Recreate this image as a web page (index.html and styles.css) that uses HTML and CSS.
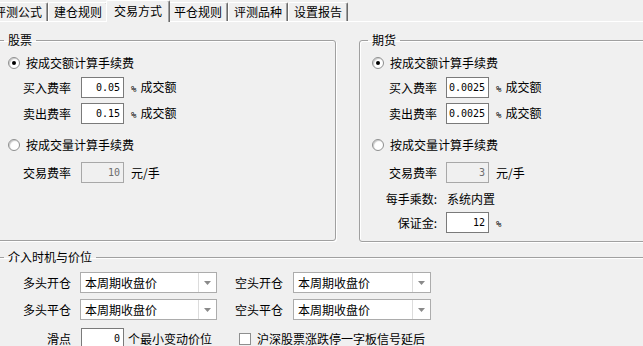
FILE: index.html
```html
<!DOCTYPE html>
<html>
<head>
  <title>交易方式</title>
  <link rel="stylesheet" href="styles.css">
</head>
<body>

  <div class="tabs">
    <div class="tab">评测公式</div>
    <div class="tab">建仓规则</div>
    <div class="tab active">交易方式</div>
    <div class="tab">平仓规则</div>
    <div class="tab">评测品种</div>
    <div class="tab">设置报告</div>
  </div>

  <div class="panel">
    <div class="top-row">

      <!-- 股票 -->
      <fieldset class="group stock">
        <legend>股票</legend>
        <div class="radio-row first">
          <span class="radio on"></span>按成交额计算手续费
        </div>
        <div class="field-row gap4">
          <span class="label">买入费率</span>
          <span class="input">0.05</span>
          <span class="unit"><span class="pct">%</span>成交额</span>
        </div>
        <div class="field-row gap5">
          <span class="label">卖出费率</span>
          <span class="input">0.15</span>
          <span class="unit"><span class="pct">%</span>成交额</span>
        </div>
        <div class="radio-row gap11">
          <span class="radio"></span>按成交量计算手续费
        </div>
        <div class="field-row gap7">
          <span class="label">交易费率</span>
          <span class="input disabled">10</span>
          <span class="unit">元/手</span>
        </div>
      </fieldset>

      <!-- 期货 -->
      <fieldset class="group futures">
        <legend>期货</legend>
        <div class="radio-row first">
          <span class="radio on"></span>按成交额计算手续费
        </div>
        <div class="field-row gap4">
          <span class="label">买入费率</span>
          <span class="input">0.0025</span>
          <span class="unit"><span class="pct">%</span>成交额</span>
        </div>
        <div class="field-row gap5">
          <span class="label">卖出费率</span>
          <span class="input">0.0025</span>
          <span class="unit"><span class="pct">%</span>成交额</span>
        </div>
        <div class="radio-row gap11">
          <span class="radio"></span>按成交量计算手续费
        </div>
        <div class="field-row gap7">
          <span class="label">交易费率</span>
          <span class="input disabled">3</span>
          <span class="unit">元/手</span>
        </div>
        <div class="field-row gap5">
          <span class="label">每手乘数:</span>
          <span class="value">系统内置</span>
        </div>
        <div class="field-row gap3">
          <span class="label">保证金:</span>
          <span class="input">12</span>
          <span class="unit"><span class="pct">%</span></span>
        </div>
      </fieldset>

    </div>

    <!-- 介入时机与价位 -->
    <fieldset class="group entry">
      <legend>介入时机与价位</legend>
      <div class="combo-row first">
        <span class="label">多头开仓</span>
        <span class="combo"><span class="combo-text">本周期收盘价</span><span class="combo-arrow"><svg width="7" height="4" viewBox="0 0 7 4"><path d="M0 0h7L3.5 4z" fill="#8a8a8a"/></svg></span></span>
        <span class="label wide">空头开仓</span>
        <span class="combo right"><span class="combo-text">本周期收盘价</span><span class="combo-arrow"><svg width="7" height="4" viewBox="0 0 7 4"><path d="M0 0h7L3.5 4z" fill="#8a8a8a"/></svg></span></span>
      </div>
      <div class="combo-row gap6">
        <span class="label">多头平仓</span>
        <span class="combo"><span class="combo-text">本周期收盘价</span><span class="combo-arrow"><svg width="7" height="4" viewBox="0 0 7 4"><path d="M0 0h7L3.5 4z" fill="#8a8a8a"/></svg></span></span>
        <span class="label wide">空头平仓</span>
        <span class="combo right"><span class="combo-text">本周期收盘价</span><span class="combo-arrow"><svg width="7" height="4" viewBox="0 0 7 4"><path d="M0 0h7L3.5 4z" fill="#8a8a8a"/></svg></span></span>
      </div>
      <div class="combo-row gap8">
        <span class="label slip">滑点</span>
        <span class="input">0</span>
        <span class="unit tight">个最小变动价位</span>
        <span class="check"></span>
        <span>沪深股票涨跌停一字板信号延后</span>
      </div>
    </fieldset>
  </div>

</body>
</html>
```

FILE: styles.css
```css
body {
  margin: 0;
  width: 643px;
  height: 346px;
  overflow: hidden;
  background-color: #f0f0f0;
  font-family: "Noto Sans CJK SC", sans-serif;
  font-size: 12px;
  line-height: 14px;
  color: #000000;
}

/* Tab strip */
.tabs {
  display: flex;
  align-items: flex-end;
  height: 21px;
  margin-left: -12px;
}

.tab {
  flex: none;
  width: 60px;
  height: 19px;
  box-sizing: border-box;
  border-top: 1px solid #ffffff;
  border-left: 1px solid #ffffff;
  border-right: 1px solid #696969;
  box-shadow: inset -1px 0 #a0a0a0;
  border-radius: 2px 2px 0 0;
  text-align: center;
  line-height: 18px;
}

.tab.active {
  position: relative;
  z-index: 1;
  width: 64px;
  height: 22px;
  margin: 0 -2px -1px;
  background-color: #f0f0f0;
  line-height: 20px;
}

.panel {
  border-top: 1px solid #ffffff;
  padding-top: 11px;
}

/* Group boxes */
.group {
  margin: 0;
  padding: 0;
  min-width: 0;
  box-sizing: border-box;
  border: 1px solid #a0a0a0;
  border-radius: 3px;
  box-shadow: 1px 1px 0 #ffffff, inset 1px 1px 0 #ffffff;
}

.group legend {
  margin-left: 8px;
  padding: 0 4px;
  line-height: 14px;
}

.top-row {
  display: flex;
  gap: 23px;
  margin-left: -5px;
}

.stock {
  flex: none;
  width: 341px;
  height: 208px;
}

.futures {
  flex: none;
  width: 340px;
  height: 209px;
}

.entry {
  width: 700px;
  height: 130px;
  margin: 8px 0 0 -5px;
}

/* Rows */
.radio-row {
  display: flex;
  align-items: center;
  height: 20px;
  padding-left: 12px;
}

.field-row {
  display: flex;
  align-items: center;
  height: 21px;
  padding-left: 27px;
}

.futures .field-row {
  padding-left: 25px;
}

.combo-row {
  display: flex;
  align-items: center;
  height: 21px;
  padding-left: 27px;
}

.first { margin-top: 6px; }
.entry .first { margin-top: 8px; }
.gap3 { margin-top: 3px; }
.gap4 { margin-top: 4px; }
.gap5 { margin-top: 5px; }
.gap6 { margin-top: 6px; }
.gap7 { margin-top: 7px; }
.gap8 { margin-top: 8px; }
.gap11 { margin-top: 11px; }

.label {
  flex: none;
  width: 58px;
  box-sizing: border-box;
  padding-right: 10px;
  text-align: right;
}

.futures .label {
  width: 61px;
  padding-right: 9px;
}

.futures .value {
  margin-left: 1px;
}

.combo-row .label {
  width: 57px;
  padding-right: 9px;
}

.combo-row .label.slip {
  width: 58px;
  padding-right: 10px;
}

.combo-row .label.wide {
  width: 76px;
  padding-right: 10px;
}

/* Controls */
.radio {
  flex: none;
  width: 12px;
  height: 12px;
  box-sizing: border-box;
  margin-right: 6px;
  border: 1px solid #8e8f8f;
  border-radius: 50%;
  background-color: #ffffff;
  box-shadow: inset 1px 1px 1px #c8c8c8;
  display: flex;
  align-items: center;
  justify-content: center;
}

.radio.on::after {
  content: "";
  width: 4px;
  height: 4px;
  border-radius: 50%;
  background-color: #000000;
}

.input {
  flex: none;
  width: 43px;
  height: 21px;
  box-sizing: border-box;
  padding-right: 3px;
  border: 1px solid #7a7a7a;
  background-color: #ffffff;
  font-family: "DejaVu Sans Mono", monospace;
  font-size: 10px;
  line-height: 19px;
  text-align: right;
}

.input.disabled {
  background-color: #f0f0f0;
  border-color: #a8a8a8;
  color: #6d6d6d;
}

.unit {
  margin-left: 7px;
}

.unit.tight {
  margin-left: 4px;
}

.pct {
  margin-right: 4px;
  font-family: "DejaVu Sans Mono", monospace;
  font-size: 9px;
}

.combo {
  flex: none;
  display: flex;
  width: 137px;
  height: 21px;
  box-sizing: border-box;
  border: 1px solid #acacac;
  background-color: #ffffff;
}

.combo.right {
  width: 138px;
}

.combo-text {
  flex: 1;
  padding-left: 4px;
  line-height: 19px;
}

.combo-arrow {
  flex: none;
  width: 17px;
  border-left: 1px solid #dcdcdc;
  display: flex;
  align-items: center;
  justify-content: center;
}

.check {
  flex: none;
  width: 12px;
  height: 12px;
  box-sizing: border-box;
  margin: 0 6px 0 27px;
  border: 1px solid #8e8f8f;
  background-color: #ffffff;
}
```
